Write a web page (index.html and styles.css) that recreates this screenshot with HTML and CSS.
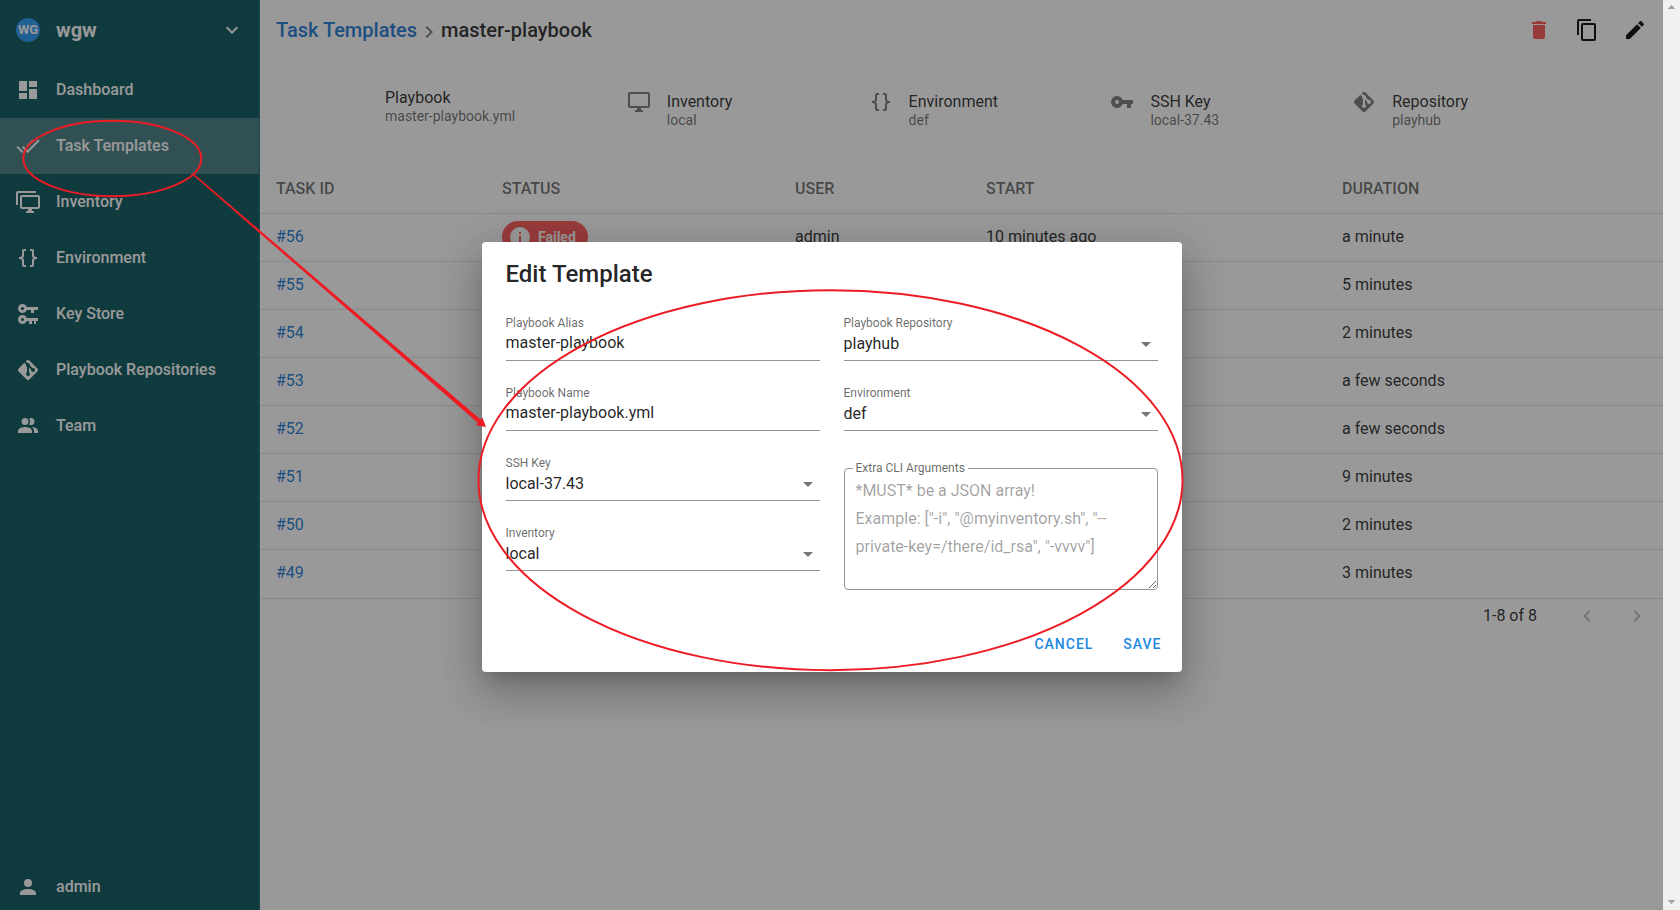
FILE: index.html
```html
<!DOCTYPE html>
<html lang="en">
<head>
<meta charset="utf-8">
<title>Edit Template</title>
<link rel="stylesheet" href="styles.css">
</head>
<body>
<svg class="sprite" aria-hidden="true">
  <symbol id="i-down" viewBox="0 0 24 24"><path d="M7.41,8.58L12,13.17L16.59,8.58L18,10L12,16L6,10L7.41,8.58Z"/></symbol>
  <symbol id="i-left" viewBox="0 0 24 24"><path d="M15.41,16.58L10.83,12L15.41,7.41L14,6L8,12L14,18L15.41,16.58Z"/></symbol>
  <symbol id="i-right" viewBox="0 0 24 24"><path d="M8.59,16.58L13.17,12L8.59,7.41L10,6L16,12L10,18L8.59,16.58Z"/></symbol>
  <symbol id="i-dashboard" viewBox="0 0 24 24"><path d="M13,3V9H21V3M13,21H21V11H13M3,21H11V15H3M3,13H11V3H3V13Z"/></symbol>
  <symbol id="i-checks" viewBox="0 0 24 24"><path d="M0.41,13.41L6,19L7.41,17.58L1.83,12M22.24,5.58L11.66,16.17L7.5,12L6.07,13.41L11.66,19L23.66,7M18,7L16.59,5.58L10.24,11.93L11.66,13.34L18,7Z"/></symbol>
  <symbol id="i-monitors" viewBox="0 0 24 24"><path d="M22,17V7H6V17H22M22,5A2,2 0 0,1 24,7V17C24,18.11 23.1,19 22,19H16V21H18V23H10V21H12V19H6C4.89,19 4,18.11 4,17V7A2,2 0 0,1 6,5H22M2,3V15H0V3A2,2 0 0,1 2,1H20V3H2Z"/></symbol>
  <symbol id="i-monitor" viewBox="0 0 24 24"><path d="M21,16H3V4H21M21,2H3C1.89,2 1,2.89 1,4V16A2,2 0 0,0 3,18H10V20H8V22H16V20H14V18H21A2,2 0 0,0 23,16V4C23,2.89 22.1,2 21,2Z"/></symbol>
  <symbol id="i-braces" viewBox="0 0 24 24"><path d="M8,3A2,2 0 0,0 6,5V9A2,2 0 0,1 4,11H3V13H4A2,2 0 0,1 6,15V19A2,2 0 0,0 8,21H10V19H8V14A2,2 0 0,0 6,12A2,2 0 0,0 8,10V5H10V3M16,3A2,2 0 0,1 18,5V9A2,2 0 0,0 20,11H21V13H20A2,2 0 0,0 18,15V19A2,2 0 0,1 16,21H14V19H16V14A2,2 0 0,1 18,12A2,2 0 0,1 16,10V5H14V3H16Z"/></symbol>
  <symbol id="i-keys" viewBox="0 0 24 24"><path d="M6.5,2C8.46,2 10.13,3.25 10.74,5H22V8H18V11H15V8H10.74C10.13,9.75 8.46,11 6.5,11C4,11 2,9 2,6.5C2,4 4,2 6.5,2M6.5,5A1.5,1.5 0 0,0 5,6.5A1.5,1.5 0 0,0 6.5,8A1.5,1.5 0 0,0 8,6.5A1.5,1.5 0 0,0 6.5,5M6.5,13C8.46,13 10.13,14.25 10.74,16H22V19H20V22H18V19H16V22H13V19H10.74C10.13,20.75 8.46,22 6.5,22C4,22 2,20 2,17.5C2,15 4,13 6.5,13M6.5,16A1.5,1.5 0 0,0 5,17.5A1.5,1.5 0 0,0 6.5,19A1.5,1.5 0 0,0 8,17.5A1.5,1.5 0 0,0 6.5,16Z"/></symbol>
  <symbol id="i-key" viewBox="0 0 24 24"><path d="M7,14A2,2 0 0,1 5,12A2,2 0 0,1 7,10A2,2 0 0,1 9,12A2,2 0 0,1 7,14M12.65,10C11.83,7.67 9.61,6 7,6A6,6 0 0,0 1,12A6,6 0 0,0 7,18C9.61,18 11.83,16.33 12.65,14H17V18H21V14H23V10H12.65Z"/></symbol>
  <symbol id="i-git" viewBox="0 0 24 24"><path d="M2.6,10.59L8.38,4.8L10.07,6.5C9.83,7.35 10.22,8.28 11,8.73V14.27C10.4,14.61 10,15.26 10,16A2,2 0 0,0 12,18A2,2 0 0,0 14,16C14,15.26 13.6,14.61 13,14.27V9.41L15.07,11.5C15,11.65 15,11.82 15,12A2,2 0 0,0 17,14A2,2 0 0,0 19,12A2,2 0 0,0 17,10C16.82,10 16.65,10 16.5,10.07L13.93,7.5C14.19,6.57 13.71,5.55 12.78,5.16C12.35,5 11.9,4.96 11.5,5.07L9.8,3.38L10.59,2.6C11.37,1.81 12.63,1.81 13.41,2.6L21.4,10.59C22.19,11.37 22.19,12.63 21.4,13.41L13.41,21.4C12.63,22.19 11.37,22.19 10.59,21.4L2.6,13.41C1.81,12.63 1.81,11.37 2.6,10.59Z"/></symbol>
  <symbol id="i-team" viewBox="0 0 24 24"><path d="M16,17V19H2V17C2,17 2,13 9,13C16,13 16,17 16,17M12.5,7.5A3.5,3.5 0 0,0 9,4A3.5,3.5 0 0,0 5.5,7.5A3.5,3.5 0 0,0 9,11A3.5,3.5 0 0,0 12.5,7.5M15.94,13A5.32,5.32 0 0,1 18,17V19H22V17C22,17 22,13.37 15.94,13M15,4A3.39,3.39 0 0,0 13.07,4.59A5,5 0 0,1 13.07,10.41A3.39,3.39 0 0,0 15,11A3.5,3.5 0 0,0 18.5,7.5A3.5,3.5 0 0,0 15,4Z"/></symbol>
  <symbol id="i-user" viewBox="0 0 24 24"><path d="M12,4A4,4 0 0,1 16,8A4,4 0 0,1 12,12A4,4 0 0,1 8,8A4,4 0 0,1 12,4M12,14C16.42,14 20,15.79 20,18V20H4V18C4,15.79 7.58,14 12,14Z"/></symbol>
  <symbol id="i-trash" viewBox="0 0 24 24"><path d="M19,4H15.5L14.5,3H9.5L8.5,4H5V6H19M6,19A2,2 0 0,0 8,21H16A2,2 0 0,0 18,19V7H6V19Z"/></symbol>
  <symbol id="i-copy" viewBox="0 0 24 24"><path d="M19,21H8V7H19M19,5H8A2,2 0 0,0 6,7V21A2,2 0 0,0 8,23H19A2,2 0 0,0 21,21V7A2,2 0 0,0 19,5M16,1H4A2,2 0 0,0 2,3V17H4V3H16V1Z"/></symbol>
  <symbol id="i-pencil" viewBox="0 0 24 24"><path d="M20.71,7.04C21.1,6.65 21.1,6 20.71,5.63L18.37,3.29C18,2.9 17.35,2.9 16.96,3.29L15.12,5.12L18.87,8.87M3,17.25V21H6.75L17.81,9.93L14.06,6.18L3,17.25Z"/></symbol>
  <symbol id="i-info" viewBox="0 0 24 24"><path d="M13,9H11V7H13M13,17H11V11H13M12,2A10,10 0 0,0 2,12A10,10 0 0,0 12,22A10,10 0 0,0 22,12A10,10 0 0,0 12,2Z"/></symbol>
  <symbol id="i-menu" viewBox="0 0 24 24"><path d="M7,10L12,15L17,10H7Z"/></symbol>
</svg>

<div class="page">
  <div class="app">
    <nav class="sidebar">
      <button class="project" type="button">
        <span class="avatar">WG</span>
        <span class="project-name">wgw</span>
        <svg class="icon"><use href="#i-down"/></svg>
      </button>
      <div class="menu">
        <a class="menu-item" href="#"><svg class="icon"><use href="#i-dashboard"/></svg>Dashboard</a>
        <a class="menu-item menu-item-active" href="#"><svg class="icon"><use href="#i-checks"/></svg>Task Templates</a>
        <a class="menu-item" href="#"><svg class="icon"><use href="#i-monitors"/></svg>Inventory</a>
        <a class="menu-item" href="#"><svg class="icon"><use href="#i-braces"/></svg>Environment</a>
        <a class="menu-item" href="#"><svg class="icon"><use href="#i-keys"/></svg>Key Store</a>
        <a class="menu-item" href="#"><svg class="icon"><use href="#i-git"/></svg>Playbook Repositories</a>
        <a class="menu-item" href="#"><svg class="icon"><use href="#i-team"/></svg>Team</a>
      </div>
      <a class="menu-item menu-item-user" href="#"><svg class="icon"><use href="#i-user"/></svg>admin</a>
    </nav>

    <main class="main">
      <header class="toolbar">
        <h1 class="crumbs"><a class="link" href="#">Task Templates</a><svg class="icon crumb-sep"><use href="#i-right"/></svg><span>master-playbook</span></h1>
        <button class="icon-btn icon-btn-danger" type="button" aria-label="Delete"><svg class="icon"><use href="#i-trash"/></svg></button>
        <button class="icon-btn" type="button" aria-label="Copy"><svg class="icon"><use href="#i-copy"/></svg></button>
        <button class="icon-btn" type="button" aria-label="Edit"><svg class="icon"><use href="#i-pencil"/></svg></button>
      </header>

      <section class="facts">
        <div class="fact"><div><div class="fact-title">Playbook</div><div class="fact-value">master-playbook.yml</div></div></div>
        <div class="fact fact-with-icon"><svg class="icon"><use href="#i-monitor"/></svg><div><div class="fact-title">Inventory</div><div class="fact-value">local</div></div></div>
        <div class="fact fact-with-icon"><svg class="icon"><use href="#i-braces"/></svg><div><div class="fact-title">Environment</div><div class="fact-value">def</div></div></div>
        <div class="fact fact-with-icon"><svg class="icon"><use href="#i-key"/></svg><div><div class="fact-title">SSH Key</div><div class="fact-value">local-37.43</div></div></div>
        <div class="fact fact-with-icon"><svg class="icon"><use href="#i-git"/></svg><div><div class="fact-title">Repository</div><div class="fact-value">playhub</div></div></div>
      </section>

      <table class="tasks">
        <colgroup><col class="col-id"><col class="col-status"><col class="col-user"><col class="col-start"><col></colgroup>
        <thead><tr><th>TASK ID</th><th>STATUS</th><th>USER</th><th>START</th><th>DURATION</th></tr></thead>
        <tbody>
          <tr><td><a class="link" href="#">#56</a></td><td><span class="chip"><svg class="icon"><use href="#i-info"/></svg>Failed</span></td><td>admin</td><td>10 minutes ago</td><td>a minute</td></tr>
          <tr><td><a class="link" href="#">#55</a></td><td></td><td></td><td></td><td>5 minutes</td></tr>
          <tr><td><a class="link" href="#">#54</a></td><td></td><td></td><td></td><td>2 minutes</td></tr>
          <tr><td><a class="link" href="#">#53</a></td><td></td><td></td><td></td><td>a few seconds</td></tr>
          <tr><td><a class="link" href="#">#52</a></td><td></td><td></td><td></td><td>a few seconds</td></tr>
          <tr><td><a class="link" href="#">#51</a></td><td></td><td></td><td></td><td>9 minutes</td></tr>
          <tr><td><a class="link" href="#">#50</a></td><td></td><td></td><td></td><td>2 minutes</td></tr>
          <tr><td><a class="link" href="#">#49</a></td><td></td><td></td><td></td><td>3 minutes</td></tr>
        </tbody>
      </table>
      <footer class="pager">
        <span class="pager-text">1-8 of 8</span>
        <button class="pager-btn" type="button" aria-label="Previous page" disabled><svg class="icon"><use href="#i-left"/></svg></button>
        <button class="pager-btn" type="button" aria-label="Next page" disabled><svg class="icon"><use href="#i-right"/></svg></button>
      </footer>
    </main>

    <div class="overlay">
      <form class="dialog" role="dialog" aria-labelledby="dialog-title">
        <h2 class="dialog-title" id="dialog-title">Edit Template</h2>
        <div class="columns">
          <div class="column">
            <div class="field"><label class="label" for="alias">Playbook Alias</label><input class="control control-text" id="alias" type="text" value="master-playbook"></div>
            <div class="field"><label class="label" for="name">Playbook Name</label><input class="control control-text" id="name" type="text" value="master-playbook.yml"></div>
            <div class="field"><label class="label" for="ssh">SSH Key</label><div class="select"><select class="control" id="ssh"><option>local-37.43</option></select><svg class="icon caret"><use href="#i-menu"/></svg></div></div>
            <div class="field"><label class="label" for="inventory">Inventory</label><div class="select"><select class="control" id="inventory"><option>local</option></select><svg class="icon caret"><use href="#i-menu"/></svg></div></div>
          </div>
          <div class="column">
            <div class="field"><label class="label" for="repo">Playbook Repository</label><div class="select"><select class="control" id="repo"><option>playhub</option></select><svg class="icon caret"><use href="#i-menu"/></svg></div></div>
            <div class="field"><label class="label" for="env">Environment</label><div class="select"><select class="control" id="env"><option>def</option></select><svg class="icon caret"><use href="#i-menu"/></svg></div></div>
            <fieldset class="outlined">
              <legend class="outlined-legend"><label for="args">Extra CLI Arguments</label></legend>
              <textarea class="args" id="args" placeholder="*MUST* be a JSON array!&#10;Example: [&quot;-i&quot;, &quot;@myinventory.sh&quot;, &quot;--private-key=/there/id_rsa&quot;, &quot;-vvvv&quot;]"></textarea>
            </fieldset>
          </div>
        </div>
        <div class="actions">
          <button class="text-btn" type="button">CANCEL</button>
          <button class="text-btn" type="submit">SAVE</button>
        </div>
      </form>
    </div>
  </div>

  <div class="scrollbar" aria-hidden="true">
    <svg class="scroll-arrow" viewBox="0 0 17 17"><path d="M5 9H12V8H11V7H10V6H9V5H8V6H7V7H6V8H5Z"/></svg>
    <svg class="scroll-arrow" viewBox="0 0 17 17"><path d="M5 7H12V8H11V9H10V10H9V11H8V10H7V9H6V8H5Z"/></svg>
  </div>

  <svg class="markup" width="1680" height="910" viewBox="0 0 1680 910" aria-hidden="true">
    <ellipse cx="112.3" cy="158.5" rx="89" ry="37.7"/>
    <ellipse cx="830.5" cy="480.2" rx="352" ry="190"/>
    <path d="M193.4 175.6L477.8 422.8L476 425.2L486 427L482.4 417.6L480.6 419.4L194.6 174.4Z"/>
  </svg>
</div>
</body>
</html>
```
FILE: styles.css
```css
* { box-sizing: border-box; }

body {
  margin: 0;
  font-family: Roboto, "Liberation Sans", sans-serif;
  font-size: 16px;
  line-height: 24px;
  color: rgba(0, 0, 0, 0.87);
}

button, input, select, textarea { font: inherit; color: inherit; }
button { border: 0; padding: 0; background: none; cursor: pointer; }
a { color: inherit; text-decoration: none; }

.sprite { display: none; }
.icon { width: 24px; height: 24px; flex: none; display: block; fill: currentColor; }

.page {
  position: relative;
  display: flex;
  min-height: 100vh;
  overflow: hidden;
  background: #fff;
}
.app { position: relative; flex: 1; display: flex; min-width: 0; }

.scrollbar {
  width: 17px;
  display: flex;
  flex-direction: column;
  justify-content: space-between;
  background: #f1f1f1;
}
.scroll-arrow { width: 17px; height: 17px; display: block; fill: #a3a3a3; }

/* Sidebar */
.sidebar {
  width: 260px;
  flex: none;
  display: flex;
  flex-direction: column;
  background: #005057;
  border-right: 1px solid #1f666c;
  color: #fff;
  font-weight: 500;
}
.project {
  display: flex;
  align-items: center;
  gap: 16px;
  height: 60px;
  padding: 0 15px 0 16px;
  text-align: left;
}
.avatar {
  width: 24px;
  height: 24px;
  border-radius: 50%;
  background: #2196f3;
  font-size: 13px;
  font-weight: 700;
  text-align: center;
}
.project-name { flex: 1; font-size: 20px; font-weight: 700; }
.menu { flex: 1; padding-top: 2px; }
.menu-item {
  display: flex;
  align-items: center;
  gap: 16px;
  height: 56px;
  padding: 0 16px;
}
.menu-item-active { background: rgba(255, 255, 255, 0.24); }
.menu-item-user { height: 46px; }

/* Main */
.main { flex: 1; min-width: 0; }
.link { color: #1976d2; }
.toolbar { display: flex; align-items: center; height: 60px; padding: 0 4px 0 16px; }
.crumbs {
  flex: 1;
  display: flex;
  align-items: center;
  margin: 0;
  font-size: 20px;
  font-weight: 500;
}
.crumb-sep { opacity: 0.6; margin-top: 4px; }
.icon-btn { width: 48px; height: 48px; display: grid; place-items: center; color: #000; }
.icon-btn-danger { color: #ff5252; }

.facts {
  display: grid;
  grid-template-columns: repeat(5, 1fr);
  height: 105px;
  padding: 28px 69px 0 125px;
}
.fact { display: flex; gap: 16px; }
.fact-with-icon { padding-top: 4px; }
.fact .icon { color: rgba(0, 0, 0, 0.54); margin-top: -2px; }
.fact-title { line-height: 19px; }
.fact-value { font-size: 14px; line-height: 18px; color: rgba(0, 0, 0, 0.6); }

.tasks { width: 100%; table-layout: fixed; border-spacing: 0; }
.col-id { width: 226px; }
.col-status { width: 293px; }
.col-user { width: 191px; }
.col-start { width: 356px; }
.tasks th, .tasks td {
  height: 48px;
  padding: 0 16px;
  text-align: left;
  border-bottom: 1px solid rgba(0, 0, 0, 0.12);
}
.tasks th { height: 49px; font-weight: 500; color: rgba(0, 0, 0, 0.6); }
.tasks td { padding-bottom: 2px; }
.tasks tr:last-child td { height: 49px; }
.chip {
  display: flex;
  align-items: center;
  gap: 6px;
  width: max-content;
  height: 32px;
  padding: 0 12px 0 6px;
  border-radius: 16px;
  background: #ff5252;
  color: #fff;
  font-size: 14px;
  font-weight: 700;
}

.pager { display: flex; align-items: center; height: 34px; padding-right: 8px; }
.pager-text { margin-left: auto; margin-right: 32px; }
.pager-btn { width: 36px; height: 36px; display: grid; place-items: center; color: rgba(0, 0, 0, 0.26); }
.pager-btn + .pager-btn { margin-left: 14px; }

/* Dialog */
.overlay {
  position: absolute;
  inset: 0;
  display: grid;
  place-content: center;
  padding-top: 4px;
  background: rgba(33, 33, 33, 0.46);
}
.dialog {
  width: 700px;
  max-width: 90vw;
  padding: 16px 24px 10px;
  border-radius: 4px;
  background: #fff;
  box-shadow: 0 11px 15px -7px rgba(0, 0, 0, 0.2), 0 24px 38px 3px rgba(0, 0, 0, 0.14), 0 9px 46px 8px rgba(0, 0, 0, 0.12);
}
.dialog-title { margin: 0 0 24px; font-size: 24px; font-weight: 500; line-height: 32px; }
.columns { display: grid; grid-template-columns: 1fr 1fr; gap: 24px; margin-bottom: 36px; }
.field { height: 47px; padding-top: 1px; border-bottom: 1px solid #949494; }
.field + .field { margin-top: 23px; }
.label { display: block; font-size: 12px; line-height: 16px; color: rgba(0, 0, 0, 0.6); }
.control {
  display: block;
  width: 100%;
  height: 26px;
  border: 0;
  padding: 0;
  outline: 0;
  background: none;
  appearance: none;
}
.control-text { height: 24px; }
.select { display: grid; align-items: center; }
.select > * { grid-area: 1 / 1; }
.caret { justify-self: end; color: rgba(0, 0, 0, 0.54); pointer-events: none; }
.outlined {
  min-width: 0;
  margin: 29px 0 0;
  padding: 0;
  border: 1px solid #949494;
  border-radius: 4px;
}
.outlined-legend { margin-left: 8px; padding: 0 3px; font-size: 12px; line-height: 16px; color: rgba(0, 0, 0, 0.6); }
.args {
  display: block;
  width: 100%;
  height: 113px;
  border: 0;
  padding: 1px 11px 0;
  outline: 0;
  background: none;
  line-height: 28px;
  resize: vertical;
}
.args::placeholder { color: rgba(0, 0, 0, 0.38); }
.actions { display: flex; justify-content: flex-end; gap: 14px; margin-right: -12px; }
.text-btn {
  height: 36px;
  padding: 0 8px;
  font-size: 14px;
  font-weight: 500;
  letter-spacing: 1px;
  color: #1e88e5;
}

/* Red marks drawn over the screen */
.markup { position: absolute; top: 0; left: 0; pointer-events: none; }
.markup ellipse { fill: none; stroke: #ed1c24; stroke-width: 2; }
.markup path { fill: #ed1c24; }
```
